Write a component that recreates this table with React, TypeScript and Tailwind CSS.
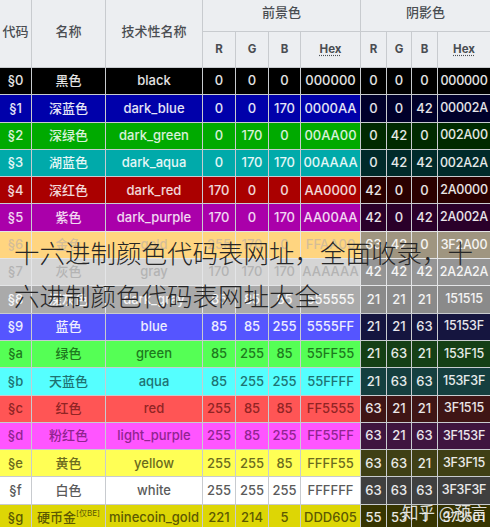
import clsx from 'clsx';

type Row = {
  code: string;
  name: string;
  tag?: string;
  tech: string;
  fg: [number, number, number];
  hex: string;
  sh: [number, number, number];
  shex: string;
  bg: string;
  sbg: string;
  text: string;
};

const rows: Row[] = [
  { code: '§0', name: '黑色', tech: 'black', fg: [0, 0, 0], hex: '000000', sh: [0, 0, 0], shex: '000000', bg: 'bg-[#000000]', sbg: 'bg-[#000000]', text: 'text-white/90' },
  { code: '§1', name: '深蓝色', tech: 'dark_blue', fg: [0, 0, 170], hex: '0000AA', sh: [0, 0, 42], shex: '00002A', bg: 'bg-[#0000aa]', sbg: 'bg-[#00002a]', text: 'text-white/90' },
  { code: '§2', name: '深绿色', tech: 'dark_green', fg: [0, 170, 0], hex: '00AA00', sh: [0, 42, 0], shex: '002A00', bg: 'bg-[#00aa00]', sbg: 'bg-[#002a00]', text: 'text-white/85' },
  { code: '§3', name: '湖蓝色', tech: 'dark_aqua', fg: [0, 170, 170], hex: '00AAAA', sh: [0, 42, 42], shex: '002A2A', bg: 'bg-[#00aaaa]', sbg: 'bg-[#002a2a]', text: 'text-white/90' },
  { code: '§4', name: '深红色', tech: 'dark_red', fg: [170, 0, 0], hex: 'AA0000', sh: [42, 0, 0], shex: '2A0000', bg: 'bg-[#aa0000]', sbg: 'bg-[#2a0000]', text: 'text-white/85' },
  { code: '§5', name: '紫色', tech: 'dark_purple', fg: [170, 0, 170], hex: 'AA00AA', sh: [42, 0, 42], shex: '2A002A', bg: 'bg-[#aa00aa]', sbg: 'bg-[#2a002a]', text: 'text-white/85' },
  { code: '§6', name: '金色', tech: 'gold', fg: [255, 170, 0], hex: 'FFAA00', sh: [63, 42, 0], shex: '3F2A00', bg: 'bg-[#ffaa00]', sbg: 'bg-[#3f2a00]', text: 'text-[#a87a30]' },
  { code: '§7', name: '灰色', tech: 'gray', fg: [170, 170, 170], hex: 'AAAAAA', sh: [42, 42, 42], shex: '2A2A2A', bg: 'bg-[#aaaaaa]', sbg: 'bg-[#2a2a2a]', text: 'text-[#666666]' },
  { code: '§8', name: '深灰色', tech: 'dark_gray', fg: [85, 85, 85], hex: '555555', sh: [21, 21, 21], shex: '151515', bg: 'bg-[#555555]', sbg: 'bg-[#151515]', text: 'text-white/90' },
  { code: '§9', name: '蓝色', tech: 'blue', fg: [85, 85, 255], hex: '5555FF', sh: [21, 21, 63], shex: '15153F', bg: 'bg-[#5555ff]', sbg: 'bg-[#15153f]', text: 'text-white/90' },
  { code: '§a', name: '绿色', tech: 'green', fg: [85, 255, 85], hex: '55FF55', sh: [21, 63, 21], shex: '153F15', bg: 'bg-[#55ff55]', sbg: 'bg-[#153f15]', text: 'text-[#1e7a1e]' },
  { code: '§b', name: '天蓝色', tech: 'aqua', fg: [85, 255, 255], hex: '55FFFF', sh: [21, 63, 63], shex: '153F3F', bg: 'bg-[#55ffff]', sbg: 'bg-[#153f3f]', text: 'text-[#1e7373]' },
  { code: '§c', name: '红色', tech: 'red', fg: [255, 85, 85], hex: 'FF5555', sh: [63, 21, 21], shex: '3F1515', bg: 'bg-[#ff5555]', sbg: 'bg-[#3f1515]', text: 'text-[#902424]' },
  { code: '§d', name: '粉红色', tech: 'light_purple', fg: [255, 85, 255], hex: 'FF55FF', sh: [63, 21, 63], shex: '3F153F', bg: 'bg-[#ff55ff]', sbg: 'bg-[#3f153f]', text: 'text-[#902490]' },
  { code: '§e', name: '黄色', tech: 'yellow', fg: [255, 255, 85], hex: 'FFFF55', sh: [63, 63, 21], shex: '3F3F15', bg: 'bg-[#ffff55]', sbg: 'bg-[#3f3f15]', text: 'text-[#6b6b1e]' },
  { code: '§f', name: '白色', tech: 'white', fg: [255, 255, 255], hex: 'FFFFFF', sh: [63, 63, 63], shex: '3F3F3F', bg: 'bg-[#ffffff]', sbg: 'bg-[#3f3f3f]', text: 'text-[#5a5a5a]' },
  { code: '§g', name: '硬币金', tag: '[仅BE]', tech: 'minecoin_gold', fg: [221, 214, 5], hex: 'DDD605', sh: [55, 53, 1], shex: '373501', bg: 'bg-[#ddd605]', sbg: 'bg-[#373501]', text: 'text-[#5c5902]' },
];

function Cell({ className, children }: { className?: string; children?: React.ReactNode }) {
  return <div className={clsx('flex items-center justify-center whitespace-nowrap', className)}>{children}</div>;
}

function Head({ className, children }: { className?: string; children?: React.ReactNode }) {
  return (
    <Cell className={clsx('bg-[#eceef1] text-[#4a4d52]', className)}>
      {children}
    </Cell>
  );
}

export default function App() {
  return (
    <div className="relative w-[490px] h-[527px] overflow-hidden bg-white font-['Inter','Noto_Sans_CJK_SC',sans-serif]">
      <div className="grid grid-cols-[31px_73px_96px_32px_32px_31px_59px_25px_24px_25px_52px] grid-rows-[31px_35px] auto-rows-[26.3px] gap-px bg-[#c8cbcf] text-[13px] font-medium">
        {/* header */}
        <Head className="row-span-2 pb-[4px]">代码</Head>
        <Head className="row-span-2 pb-[4px]">名称</Head>
        <Head className="row-span-2 pb-[4px]">技术性名称</Head>
        <Head className="col-span-4 pb-[5px]">前景色</Head>
        <Head className="col-span-4 pb-[5px]">阴影色</Head>
        {['R', 'G', 'B', 'Hex', 'R', 'G', 'B', 'Hex'].map((h, i) => (
          <Head key={i} className="text-[11.5px] font-bold">
            {h === 'Hex' ? <span className="underline decoration-dotted underline-offset-2">Hex</span> : h}
          </Head>
        ))}

        {/* rows */}
        {rows.map((r) => (
          <div key={r.code} className="contents">
            <Cell className={clsx(r.bg, r.text)}>{r.code}</Cell>
            <Cell className={clsx(r.bg, r.text)}>
              {r.name}
              {r.tag && <sup className="text-[8px] font-normal -top-[5px]">{r.tag}</sup>}
            </Cell>
            <Cell className={clsx(r.bg, r.text)}>{r.tech}</Cell>
            <Cell className={clsx(r.bg, r.text)}>{r.fg[0]}</Cell>
            <Cell className={clsx(r.bg, r.text)}>{r.fg[1]}</Cell>
            <Cell className={clsx(r.bg, r.text)}>{r.fg[2]}</Cell>
            <Cell className={clsx(r.bg, r.text)}>{r.hex}</Cell>
            <Cell className={clsx(r.sbg, 'text-white/90')}>{r.sh[0]}</Cell>
            <Cell className={clsx(r.sbg, 'text-white/90')}>{r.sh[1]}</Cell>
            <Cell className={clsx(r.sbg, 'text-white/90')}>{r.sh[2]}</Cell>
            <Cell className={clsx(r.sbg, 'text-white/90 text-[12.5px] tracking-[-0.2px]')}>{r.shex}</Cell>
          </div>
        ))}
      </div>

      {/* title overlay */}
      <div className="absolute left-0 right-0 top-[231px] h-[82px] bg-white/50">
        <div className="pl-[14px] -mt-[1px] text-[25.5px] leading-[43px] text-[#262626] font-['Noto_Sans_CJK_SC',sans-serif] font-light whitespace-nowrap">
          <div>十六进制颜色代码表网址，全面收录，十</div>
          <div>六进制颜色代码表网址大全</div>
        </div>
      </div>

      {/* watermark */}
      <div className="absolute left-[402px] top-[500px] text-[16.5px] text-white/85 font-['Noto_Sans_CJK_SC',sans-serif] whitespace-nowrap [text-shadow:0_0_2px_rgba(0,0,0,0.4)]">
        知乎 @预言
      </div>
    </div>
  );
}
